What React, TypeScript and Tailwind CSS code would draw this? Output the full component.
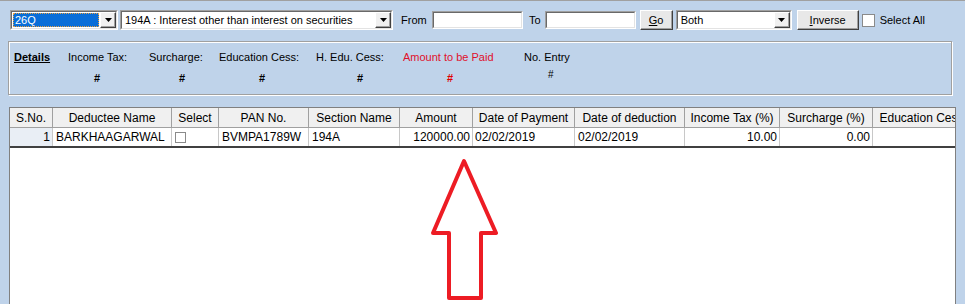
import React from "react";

function DropBtn() {
  return (
    <div className="flex h-full w-[16px] shrink-0 items-center justify-center border border-t-white border-l-white border-b-[#404040] border-r-[#404040] bg-[#f0f0f0] shadow-[inset_-1px_-1px_0_#a0a0a0]">
      <svg width="7" height="4" viewBox="0 0 7 4">
        <polygon points="0,0 7,0 3.5,4" fill="#000" />
      </svg>
    </div>
  );
}

function Combo({ w, children, selected }: { w: string; children: React.ReactNode; selected?: boolean }) {
  return (
    <div className={`flex h-[20px] ${w} shrink-0 border border-t-[#a0a0a0] border-l-[#a0a0a0] border-b-white border-r-white`}>
      <div className="flex min-w-0 flex-1 border border-t-[#696969] border-l-[#696969] border-b-[#e3e3e3] border-r-[#e3e3e3] bg-white">
        <div className="flex min-w-0 flex-1 items-center p-[1px]">
          {selected ? (
            <div className="flex h-full flex-1 items-center border border-dotted border-[#e8a040] bg-[#0a6ed8] pl-[1px] text-white">
              {children}
            </div>
          ) : (
            <div className="flex h-full flex-1 items-center truncate pl-[2px] text-black">{children}</div>
          )}
        </div>
        <DropBtn />
      </div>
    </div>
  );
}

function TextBox({ w }: { w: string }) {
  return (
    <div className={`h-[18px] ${w} shrink-0 border border-t-[#a0a0a0] border-l-[#a0a0a0] border-b-white border-r-white`}>
      <div className="h-full w-full border border-t-[#696969] border-l-[#696969] border-b-[#e3e3e3] border-r-[#e3e3e3] bg-white" />
    </div>
  );
}

function Btn({ w, children }: { w: string; children: React.ReactNode }) {
  return (
    <div className={`h-[20px] ${w} shrink-0 border border-[#404040] border-t-white border-l-white bg-[#e8e8e8] shadow-[inset_-1px_-1px_0_#a0a0a0]`}>
      <div className="flex h-full items-center justify-center text-[11px] text-black">{children}</div>
    </div>
  );
}

function CheckBox({ size }: { size: string }) {
  return <div className={`${size} shrink-0 border border-[#8a8a8a] bg-white`} />;
}

const cols = [
  { name: "S.No.", w: "w-[43px]" },
  { name: "Deductee Name", w: "w-[119px]" },
  { name: "Select", w: "w-[47px]" },
  { name: "PAN No.", w: "w-[90px]" },
  { name: "Section Name", w: "w-[91px]" },
  { name: "Amount", w: "w-[73px]" },
  { name: "Date of Payment", w: "w-[102px]" },
  { name: "Date of deduction", w: "w-[110px]" },
  { name: "Income Tax (%)", w: "w-[95px]" },
  { name: "Surcharge (%)", w: "w-[93px]" },
  { name: "Education Cess (%)", w: "w-[120px]" },
];

export default function App() {
  const sans = "font-['Liberation_Sans',Arial,sans-serif]";
  return (
    <div className={`relative h-[304px] w-[965px] overflow-hidden border-t border-[#a0a0a0] bg-[#bfd3ea] text-[11px] ${sans}`}>
      {/* top toolbar */}
      <div className="mt-[9px] flex h-[20px] items-center pl-[10px]">
        <Combo w="w-[108px]" selected>
          <span className="text-[11px]">26Q</span>
        </Combo>
        <div className="w-[2px]" />
        <Combo w="w-[273px]">194A : Interest other than interest on securities</Combo>
        <span className="ml-[8px] w-[31px]">From</span>
        <TextBox w="w-[91px]" />
        <span className="ml-[6px]">To</span>
        <div className="ml-[4px]">
          <TextBox w="w-[91px]" />
        </div>
        <div className="ml-[4px]">
          <Btn w="w-[33px]">
            <span className="underline">G</span>o
          </Btn>
        </div>
        <div className="ml-[3px]">
          <Combo w="w-[116px]">Both</Combo>
        </div>
        <div className="ml-[5px]">
          <Btn w="w-[62px]">
            <span className="underline">I</span>nverse
          </Btn>
        </div>
        <div className="ml-[3px]">
          <CheckBox size="h-[13px] w-[13px]" />
        </div>
        <span className="ml-[5px]">Select All</span>
      </div>

      {/* details box */}
      <div className="ml-[8px] mt-[11px] h-[54px] w-[944px] border border-[#a0a0a0] shadow-[1px_1px_0_#ffffff,inset_1px_1px_0_#ffffff]">
        <div className="flex pl-[5px] pt-[7px]">
          <div className="w-[54px] text-[11px] font-bold underline">Details</div>
          <div className="flex w-[81px] flex-col">
            <span>Income Tax:</span>
            <span className="mt-[4px] pl-[26px] font-bold">#</span>
          </div>
          <div className="flex w-[70px] flex-col">
            <span>Surcharge:</span>
            <span className="mt-[4px] pl-[30px] font-bold">#</span>
          </div>
          <div className="flex w-[97px] flex-col">
            <span>Education Cess:</span>
            <span className="mt-[4px] pl-[40px] font-bold">#</span>
          </div>
          <div className="flex w-[87px] flex-col">
            <span>H. Edu. Cess:</span>
            <span className="mt-[4px] pl-[41px] font-bold">#</span>
          </div>
          <div className="flex w-[121px] flex-col text-[#e0102a]">
            <span>Amount to be Paid</span>
            <span className="mt-[4px] pl-[44px] font-bold text-[#e00000]">#</span>
          </div>
          <div className="flex flex-col">
            <span>No. Entry</span>
            <span className="mt-[1px] pl-[24px] text-[10px]">#</span>
          </div>
        </div>
      </div>

      {/* grid */}
      <div className="ml-[9px] mt-[12px] h-[220px] w-[947px] overflow-hidden border border-[#808080] bg-white text-[12px] text-black">
        <div className="flex h-[20px] w-[1200px] border-b border-[#a0a0a0] bg-[#f0f0f0]">
          {cols.map((c) => (
            <div
              key={c.name}
              className={`${c.w} flex shrink-0 items-center justify-center whitespace-nowrap border-r border-[#a0a0a0]`}
            >
              {c.name}
            </div>
          ))}
        </div>
        <div className="flex h-[20px] w-[1200px] border-b-[2px] border-[#404040]">
          <div className="flex w-[43px] shrink-0 items-center justify-end border-r border-[#c8c8c8] bg-[#e9eef5] pr-[2px]">1</div>
          <div className="flex w-[119px] shrink-0 items-center border-r border-[#c8c8c8] pl-[3px]">BARKHAAGARWAL</div>
          <div className="flex w-[47px] shrink-0 items-center border-r border-[#c8c8c8] pl-[3px]">
            <CheckBox size="h-[11px] w-[11px]" />
          </div>
          <div className="flex w-[90px] shrink-0 items-center border-r border-[#c8c8c8] pl-[3px]">BVMPA1789W</div>
          <div className="flex w-[91px] shrink-0 items-center border-r border-[#c8c8c8] pl-[3px]">194A</div>
          <div className="flex w-[73px] shrink-0 items-center justify-end border-r border-[#c8c8c8] pr-[2px]">120000.00</div>
          <div className="flex w-[102px] shrink-0 items-center border-r border-[#c8c8c8] pl-[2px]">02/02/2019</div>
          <div className="flex w-[110px] shrink-0 items-center border-r border-[#c8c8c8] pl-[3px]">02/02/2019</div>
          <div className="flex w-[95px] shrink-0 items-center justify-end border-r border-[#c8c8c8] pr-[2px]">10.00</div>
          <div className="flex w-[93px] shrink-0 items-center justify-end border-r border-[#c8c8c8] pr-[2px]">0.00</div>
          <div className="w-[120px] shrink-0" />
        </div>
      </div>

      {/* annotation arrow */}
      <svg className="pointer-events-none absolute left-0 top-0" width="965" height="304">
        <polygon
          points="464,160 496,232 481,232 481,297 449,297 449,232 433,232"
          fill="none"
          stroke="#ed1c24"
          strokeWidth="4"
          strokeLinejoin="round"
        />
      </svg>
    </div>
  );
}
